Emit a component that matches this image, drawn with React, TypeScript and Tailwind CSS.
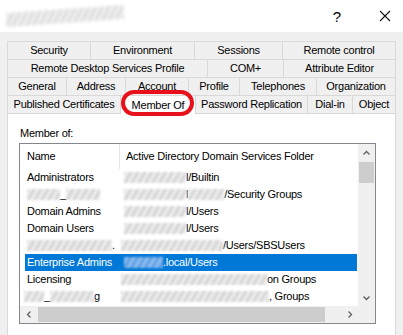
import React from "react";

type Tab = { label: string; w: string; selected?: boolean };

const tabRows: Tab[][] = [
  [
    { label: "Security", w: "w-[83px]" },
    { label: "Environment", w: "w-[104px]" },
    { label: "Sessions", w: "w-[88px]" },
    { label: "Remote control", w: "flex-1" },
  ],
  [
    { label: "Remote Desktop Services Profile", w: "w-[200px]" },
    { label: "COM+", w: "w-[76px]" },
    { label: "Attribute Editor", w: "flex-1" },
  ],
  [
    { label: "General", w: "w-[59px]" },
    { label: "Address", w: "w-[59px]" },
    { label: "Account", w: "w-[63px]" },
    { label: "Profile", w: "w-[51px]" },
    { label: "Telephones", w: "w-[77px]" },
    { label: "Organization", w: "flex-1" },
  ],
  [
    { label: "Published Certificates", w: "w-[113px]" },
    { label: "Member Of", w: "w-[75px]", selected: true },
    { label: "Password Replication", w: "w-[112px]" },
    { label: "Dial-in", w: "w-[45px]" },
    { label: "Object", w: "flex-1" },
  ],
];

// blurred-out bits of the original screenshot
function Smudge({ className = "", blue }: { className?: string; blue?: boolean }) {
  return (
    <span
      className={`inline-block h-[11px] shrink-0 blur-[1.2px] ${
        blue
          ? "bg-[repeating-linear-gradient(120deg,#5a9be4_0px,#9cc6f2_3px,#4f93df_6px)]"
          : "bg-[repeating-linear-gradient(120deg,#c9c9c9_0px,#f4f4f4_3px,#d4d4d4_6px)]"
      } ${className}`}
    />
  );
}

function Chevron({ dir }: { dir: "up" | "down" | "left" | "right" }) {
  const pts = {
    up: "0.5,4.5 3.5,1.5 6.5,4.5",
    down: "0.5,1.5 3.5,4.5 6.5,1.5",
    left: "4.5,0.5 1.5,3.5 4.5,6.5",
    right: "1.5,0.5 4.5,3.5 1.5,6.5",
  }[dir];
  const size = dir === "up" || dir === "down" ? { w: 7, h: 6 } : { w: 6, h: 7 };
  return (
    <svg width={size.w} height={size.h} viewBox={`0 0 ${size.w} ${size.h}`}>
      <polyline points={pts} fill="none" stroke="#606060" strokeWidth={1.3} />
    </svg>
  );
}

type Row = { name: React.ReactNode; folder: React.ReactNode; selected?: boolean };

const rows: Row[] = [
  {
    name: "Administrators",
    folder: (
      <>
        <Smudge className="w-[62px]" />
        <span>l/Builtin</span>
      </>
    ),
  },
  {
    name: (
      <>
        <Smudge className="w-[33px]" />
        <span>_</span>
        <Smudge className="w-[34px]" />
      </>
    ),
    folder: (
      <>
        <Smudge className="w-[62px]" />
        <span>l</span>
        <Smudge className="w-[36px]" />
        <span>/Security Groups</span>
      </>
    ),
  },
  {
    name: "Domain Admins",
    folder: (
      <>
        <Smudge className="w-[62px]" />
        <span>l/Users</span>
      </>
    ),
  },
  {
    name: "Domain Users",
    folder: (
      <>
        <Smudge className="w-[62px]" />
        <span>l/Users</span>
      </>
    ),
  },
  {
    name: (
      <>
        <Smudge className="w-[85px]" />
        <span>.</span>
      </>
    ),
    folder: (
      <>
        <Smudge className="w-[102px] -ml-[3px]" />
        <span>/Users/SBSUsers</span>
      </>
    ),
  },
  {
    name: "Enterprise Admins",
    selected: true,
    folder: (
      <>
        <Smudge blue className="w-[39px]" />
        <span>.local/Users</span>
      </>
    ),
  },
  {
    name: "Licensing",
    folder: (
      <>
        <Smudge className="w-[146px] -ml-[3px]" />
        <span>on Groups</span>
      </>
    ),
  },
  {
    name: (
      <>
        <Smudge className="w-[20px] -ml-[3px]" />
        <span>_</span>
        <Smudge className="w-[44px]" />
        <span>g</span>
      </>
    ),
    folder: (
      <>
        <Smudge className="w-[148px] -ml-[3px]" />
        <span>, Groups</span>
      </>
    ),
  },
];

export default function App() {
  return (
    <div className="relative w-[403px] h-[335px] overflow-hidden bg-[#f0f0f0] text-black font-['Liberation_Sans',Arial,sans-serif] text-[11px] tracking-[-0.25px] flex flex-col">
      {/* title bar */}
      <div className="h-[32px] bg-white flex items-center shrink-0">
        <div className="ml-[6px] w-[118px] h-[14px] -rotate-[4deg] bg-[repeating-linear-gradient(120deg,#c8c8c8_0px,#f3f3f3_3px,#d6d6d6_6px)] blur-[1.5px] opacity-80" />
        <div className="flex-1" />
        <span className="text-[15px] tracking-normal leading-none">?</span>
        <svg className="ml-[38px] mr-[12px]" width="12" height="12" viewBox="0 0 12 12">
          <path d="M1 1L11 11M11 1L1 11" stroke="#111" strokeWidth="1.1" />
        </svg>
      </div>

      {/* tabs */}
      <div className="px-[7px] pt-[9px] flex flex-col flex-1">
        {tabRows.map((row, i) => (
          <div key={i} className="flex h-[18px]">
            {row.map((tab, j) => (
              <div
                key={tab.label}
                className={`${tab.w} flex items-center justify-center border-l border-t border-[#d9d9d9] whitespace-nowrap ${
                  j === row.length - 1 ? "border-r" : ""
                } ${tab.selected ? "bg-white relative z-10 h-[19px]" : "bg-[#f0f0f0]"}`}
              >
                {tab.label}
              </div>
            ))}
          </div>
        ))}

        {/* panel */}
        <div className="flex-1 bg-white border border-b-0 border-[#d9d9d9] pl-[11px] pt-[12px]">
          <div className="pl-px leading-[14px]">Member of:</div>
          <div className="mt-[3px] w-[357px] h-[181px] border border-[#828790] flex flex-col">
            <div className="flex flex-1 min-h-0">
              <div className="w-[338px] flex flex-col">
                <div className="h-[25px] flex items-center shrink-0">
                  <div className="w-[100px] h-full flex items-center pl-[7px] border-r border-[#e5e5e5]">
                    Name
                  </div>
                  <div className="pl-[6px] whitespace-nowrap">Active Directory Domain Services Folder</div>
                </div>
                <div className="pl-[5px] flex flex-col">
                  {rows.map((r, i) => (
                    <div
                      key={i}
                      className={`w-[332px] h-[17px] flex items-center whitespace-nowrap ${
                        r.selected ? "bg-[#0078d7] text-white" : ""
                      }`}
                    >
                      <div className="w-[96px] pl-[2px] flex items-center">{r.name}</div>
                      <div className="pl-[3px] flex items-center">{r.folder}</div>
                    </div>
                  ))}
                </div>
              </div>
              {/* vertical scrollbar */}
              <div className="w-[17px] bg-[#f0f0f0] flex flex-col items-center">
                <div className="h-[17px] flex items-center justify-center">
                  <Chevron dir="up" />
                </div>
                <div className="mt-px w-[15px] h-[21px] bg-[#cdcdcd]" />
                <div className="flex-1" />
                <div className="h-[17px] flex items-center justify-center">
                  <Chevron dir="down" />
                </div>
              </div>
            </div>
            {/* horizontal scrollbar */}
            <div className="h-[17px] flex shrink-0 bg-[#f0f0f0]">
              <div className="w-[17px] flex items-center justify-center">
                <Chevron dir="left" />
              </div>
              <div className="ml-px my-px w-[287px] bg-[#cdcdcd]" />
              <div className="flex-1" />
              <div className="w-[17px] flex items-center justify-center">
                <Chevron dir="right" />
              </div>
              <div className="w-[17px]" />
            </div>
          </div>
        </div>
      </div>

      {/* red highlight oval */}
      <div className="absolute z-20 left-[121px] top-[90px] w-[73px] h-[26px] rounded-full border-[4px] border-[#e8101a]" />
    </div>
  );
}
